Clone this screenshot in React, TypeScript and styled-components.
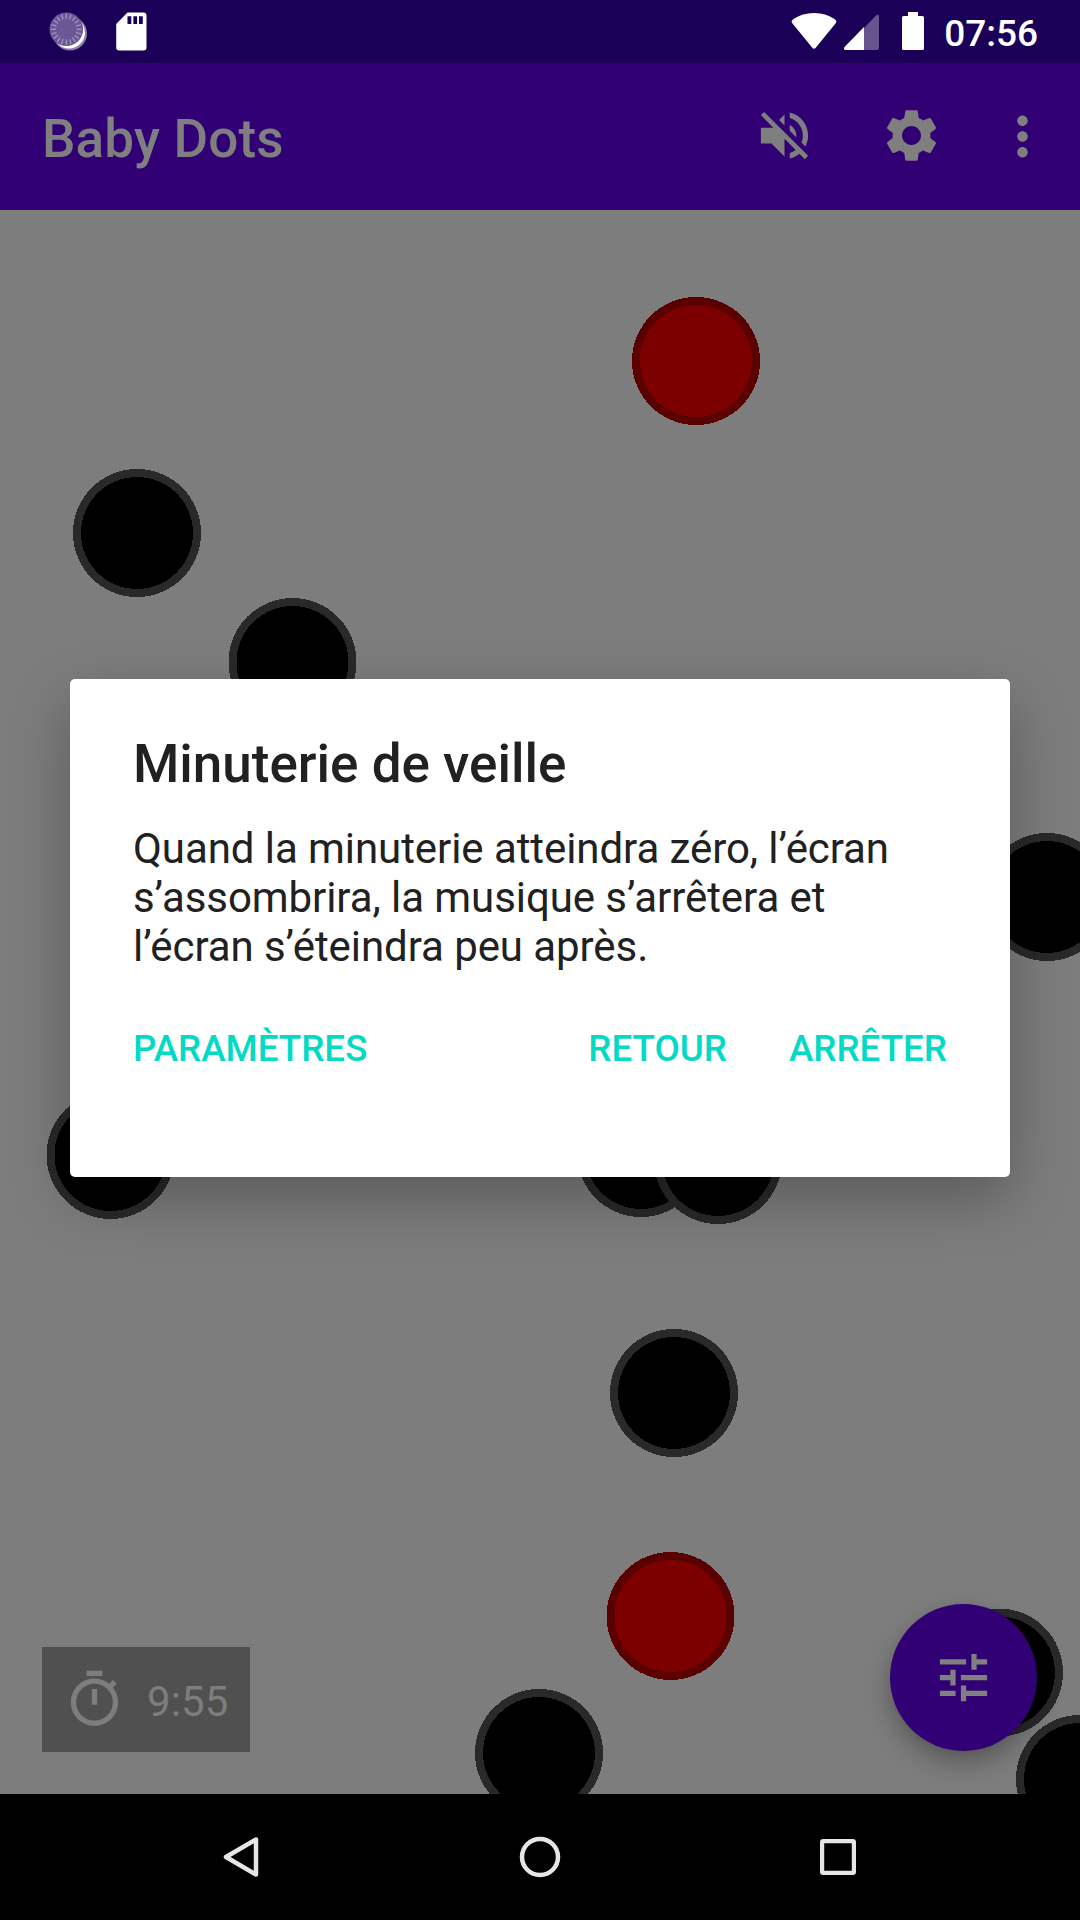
import React from 'react';
import styled, { createGlobalStyle } from 'styled-components';

const GlobalStyle = createGlobalStyle`
  * { box-sizing: border-box; }
  body { margin: 0; background: #000; }
  button { border: 0; padding: 0; background: none; font: inherit; color: inherit; }
`;

const Screen = styled.div`
  position: relative;
  display: flex;
  flex-direction: column;
  width: 1080px;
  height: 1920px;
  overflow: hidden;
  font-family: Roboto, 'Liberation Sans', sans-serif;
`;

const StatusBar = styled.header`
  display: flex;
  justify-content: space-between;
  height: 63px;
  background: #1b0057;
  color: #fff;
`;

const StatusGroup = styled.div<{ $left?: number; $right?: number }>`
  display: flex;
  align-items: center;
  padding: 0 ${(p) => p.$right ?? 0}px 0 ${(p) => p.$left ?? 0}px;
`;

const Glyph = styled.svg`
  display: block;
  flex: none;
`;

const Clock = styled.span`
  width: 94px;
  margin: 5px 0 0 16px;
  font-size: 37px;
  font-weight: 500;
  line-height: 44px;
  text-align: right;
`;

const AppBar = styled.div`
  display: flex;
  align-items: center;
  height: 147px;
  padding: 0 8px 0 42px;
  background: #310075;
  color: #7f7f7f;
`;

const AppTitle = styled.h1`
  flex: 1;
  margin: 4px 0 0;
  font-size: 53px;
  font-weight: 500;
  line-height: 62px;
  letter-spacing: 0.15px;
`;

const IconButton = styled.button<{ $width: number; $drop?: number }>`
  display: flex;
  align-items: center;
  justify-content: center;
  width: ${(p) => p.$width}px;
  height: 125px;
  margin-bottom: 2px;
  padding-top: ${(p) => p.$drop ?? 0}px;
`;

const Playground = styled.main`
  position: relative;
  height: 1584px;
  background: #7d7d7d;
  overflow: hidden;
`;

const TimerChip = styled.div`
  position: absolute;
  left: 42px;
  bottom: 42px;
  display: flex;
  align-items: center;
  gap: 21px;
  width: 208px;
  height: 105px;
  padding: 21px;
  background: #505050;
  color: #7d7d7d;
  font-size: 42px;
  line-height: 49px;
`;

const TimerText = styled.span`
  margin-top: 4px;
  letter-spacing: 0.1px;
`;

const Fab = styled.button`
  position: absolute;
  right: 43px;
  bottom: 43px;
  display: flex;
  align-items: center;
  justify-content: center;
  width: 147px;
  height: 147px;
  border-radius: 50%;
  background: #310075;
  color: #7f7f7f;
  box-shadow: 0 12px 26px rgba(0, 0, 0, 0.28), 0 2px 6px rgba(0, 0, 0, 0.06);
`;

const NavBar = styled.nav`
  display: flex;
  justify-content: center;
  height: 126px;
  background: #000;
`;

const NavButton = styled.button`
  display: flex;
  align-items: center;
  justify-content: center;
  width: 298px;
`;

const Dialog = styled.section`
  position: absolute;
  left: 70px;
  top: 679px;
  display: flex;
  flex-direction: column;
  width: 940px;
  height: 498px;
  padding: 54px 63px 0;
  border-radius: 5px;
  background: #fff;
  color: #212121;
  box-shadow: 0 22px 60px rgba(0, 0, 0, 0.28);
`;

const DialogTitle = styled.h2`
  margin: 0;
  font-size: 53px;
  font-weight: 500;
  line-height: 62px;
`;

const Message = styled.p`
  margin: 29px 0 0;
  font-size: 42px;
  line-height: 49px;
  letter-spacing: -0.07px;
  white-space: pre-line;
`;

const Actions = styled.div`
  display: flex;
  align-items: center;
  gap: 62px;
  height: 126px;
  margin-top: 15px;
  color: #03dac5;
`;

const Action = styled.button<{ $start?: boolean }>`
  margin-right: ${(p) => (p.$start ? 'auto' : '0')};
  font-size: 36.75px;
  font-weight: 500;
  line-height: 44px;
`;

const MaterialIcon = ({ d }: { d: string }) => (
  <Glyph width="63" height="63" viewBox="0 0 24 24" fill="currentColor">
    <path d={d} />
  </Glyph>
);

const icons = {
  volumeOff:
    'M16.5 12c0-1.77-1.02-3.29-2.5-4.03v2.21l2.45 2.45c.03-.2.05-.41.05-.63zm2.5 0c0 .94-.2 1.82-.54 2.64l1.51 1.51C20.63 14.91 21 13.5 21 12c0-4.28-2.99-7.86-7-8.77v2.06c2.89.86 5 3.54 5 6.71zM4.27 3L3 4.27 7.73 9H3v6h4l5 5v-6.73l4.25 4.25c-.67.52-1.42.93-2.25 1.18v2.06c1.38-.31 2.63-.95 3.69-1.81L19.73 21 21 19.73l-9-9L4.27 3zM12 4L9.91 6.09 12 8.18V4z',
  settings:
    'M19.14 12.94c.04-.3.06-.61.06-.94 0-.32-.02-.64-.07-.94l2.03-1.58c.18-.14.23-.41.12-.61l-1.92-3.32c-.12-.22-.37-.29-.59-.22l-2.39.96c-.5-.38-1.03-.7-1.62-.94l-.36-2.54c-.04-.24-.24-.41-.48-.41h-3.84c-.24 0-.43.17-.47.41l-.36 2.54c-.59.24-1.13.57-1.62.94l-2.39-.96c-.22-.08-.47 0-.59.22L2.74 8.87c-.12.21-.08.47.12.61l2.03 1.58c-.05.3-.09.63-.09.94s.02.64.07.94l-2.03 1.58c-.18.14-.23.41-.12.61l1.92 3.32c.12.22.37.29.59.22l2.39-.96c.5.38 1.03.7 1.62.94l.36 2.54c.05.24.24.41.48.41h3.84c.24 0 .44-.17.47-.41l.36-2.54c.59-.24 1.13-.56 1.62-.94l2.39.96c.22.08.47 0 .59-.22l1.92-3.32c.12-.22.07-.47-.12-.61l-2.01-1.58zM12 15.6c-1.98 0-3.6-1.62-3.6-3.6s1.62-3.6 3.6-3.6 3.6 1.62 3.6 3.6-1.62 3.6-3.6 3.6z',
  more: 'M12 8c1.1 0 2-.9 2-2s-.9-2-2-2-2 .9-2 2 .9 2 2 2zm0 2c-1.1 0-2 .9-2 2s.9 2 2 2 2-.9 2-2-.9-2-2-2zm0 6c-1.1 0-2 .9-2 2s.9 2 2 2 2-.9 2-2-.9-2-2-2z',
  timer:
    'M15 1H9v2h6V1zm-4 13h2V8h-2v6zm8.03-6.61l1.42-1.42c-.43-.51-.9-.99-1.41-1.41l-1.42 1.42C16.07 4.74 14.12 4 12 4c-4.97 0-9 4.03-9 9s4.02 9 9 9 9-4.03 9-9c0-2.12-.74-4.07-1.97-5.61zM12 20c-3.87 0-7-3.13-7-7s3.13-7 7-7 7 3.13 7 7-3.13 7-7 7z',
  tune: 'M3 17v2h6v-2H3zM3 5v2h10V5H3zm10 16v-2h8v-2h-8v-2h-2v6h2zM7 9v2H3v2h4v2h2V9H7zm14 4v-2H11v2h10zm-6-4h2V7h4V5h-4V3h-2v6z',
};

// Dot centres, relative to the top-left corner of the playground.
const dots: { x: number; y: number; red?: boolean }[] = [
  { x: 696, y: 151, red: true },
  { x: 137, y: 323 },
  { x: 292.5, y: 452 },
  { x: 1047, y: 687 },
  { x: 110.5, y: 945 },
  { x: 641, y: 943 },
  { x: 718, y: 950 },
  { x: 674, y: 1183 },
  { x: 670.5, y: 1406, red: true },
  { x: 539, y: 1543 },
  { x: 999, y: 1462.5 },
  { x: 1080, y: 1569 },
];

const spokes = Array.from({ length: 20 }, (_, i) => i * 18);

export default function App() {
  return (
    <>
      <GlobalStyle />
      <Screen>
        <StatusBar>
          <StatusGroup $left={46}>
            <Glyph width="46" height="63" viewBox="46 0 46 63">
              <circle cx="70" cy="33.5" r="17" fill="#8d7fac" />
              <circle cx="69" cy="32.5" r="16" fill="#fff" />
              <circle cx="66.3" cy="29.3" r="16.8" fill="#6b5796" />
              <g stroke="#a094bf" strokeWidth="1.3">
                {spokes.map((a) => (
                  <line key={a} x1="66.3" y1="13.8" x2="66.3" y2="19" transform={`rotate(${a} 66.3 29.3)`} />
                ))}
              </g>
            </Glyph>
            <Glyph width="60" height="63" viewBox="92 0 60 63">
              <path
                fill="#fff"
                fillRule="evenodd"
                d="M127.5 12.5H143.5a3 3 0 0 1 3 3V47.5a3 3 0 0 1-3 3H119.2a3 3 0 0 1-3-3V24zM127.5 16.3v7.7h3.8v-7.7zM133.4 16.3v7.7h3.7v-7.7zM139 16.3v7.7h3.8v-7.7z"
              />
            </Glyph>
          </StatusGroup>
          <StatusGroup $right={42}>
            <Glyph width="140" height="63" viewBox="788 0 140 63" fill="#fff">
              <path d="M791.5 21.5Q792 20 793.5 19Q802 13 814 13T834.5 19Q836 20 836.5 21.5L835.5 23.5L815.5 48Q814 49.5 812.5 48L792.5 23.5Z" />
              <path opacity=".33" d="M864 28L876 15.5Q879 13.5 879 17V47.5Q879 50 876.5 50H864Z" />
              <path d="M864 27V50H845.5Q843 49.5 844.5 47Z" />
              <path d="M908 12h10v4h4.5q1.5 0 1.5 1.5v31q0 1.5-1.5 1.5h-19q-1.5 0-1.5-1.5v-31q0-1.5 1.5-1.5h4.5z" />
            </Glyph>
            <Clock>07:56</Clock>
          </StatusGroup>
        </StatusBar>

        <AppBar>
          <AppTitle>Baby Dots</AppTitle>
          <IconButton $width={131} aria-label="Son">
            <MaterialIcon d={icons.volumeOff} />
          </IconButton>
          <IconButton $width={123} aria-label="Réglages">
            <MaterialIcon d={icons.settings} />
          </IconButton>
          <IconButton $width={99} $drop={2} aria-label="Plus">
            <MaterialIcon d={icons.more} />
          </IconButton>
        </AppBar>

        <Playground>
          <Glyph width="1080" height="1584" viewBox="0 0 1080 1584" shapeRendering="crispEdges">
            {dots.map(({ x, y, red }) => (
              <g key={`${x}-${y}`}>
                <circle cx={x} cy={y} r="64" fill={red ? '#5b0000' : '#292929'} />
                <circle cx={x} cy={y} r="56" fill={red ? '#7d0000' : '#000'} />
              </g>
            ))}
          </Glyph>
          <TimerChip>
            <MaterialIcon d={icons.timer} />
            <TimerText>9:55</TimerText>
          </TimerChip>
          <Fab aria-label="Options">
            <MaterialIcon d={icons.tune} />
          </Fab>
        </Playground>

        <NavBar>
          <NavButton aria-label="Précédent">
            <Glyph width="50" height="50" viewBox="0 0 50 50" fill="none" stroke="#e6e6e6" strokeWidth="4.5" strokeLinejoin="round">
              <path d="M39 7.5V42.5L9 25Z" />
            </Glyph>
          </NavButton>
          <NavButton aria-label="Accueil">
            <Glyph width="50" height="50" viewBox="0 0 50 50" fill="none" stroke="#e6e6e6" strokeWidth="4.5">
              <circle cx="25" cy="25" r="18" />
            </Glyph>
          </NavButton>
          <NavButton aria-label="Récents">
            <Glyph width="50" height="50" viewBox="0 0 50 50" fill="none" stroke="#e6e6e6" strokeWidth="4.2">
              <rect x="9.1" y="9.1" width="31.8" height="31.8" rx="1.2" />
            </Glyph>
          </NavButton>
        </NavBar>

        <Dialog role="dialog">
          <DialogTitle>Minuterie de veille</DialogTitle>
          <Message>
            {'Quand la minuterie atteindra zéro, l’écran\ns’assombrira, la musique s’arrêtera et\nl’écran s’éteindra peu après.'}
          </Message>
          <Actions>
            <Action $start>PARAMÈTRES</Action>
            <Action>RETOUR</Action>
            <Action>ARRÊTER</Action>
          </Actions>
        </Dialog>
      </Screen>
    </>
  );
}
